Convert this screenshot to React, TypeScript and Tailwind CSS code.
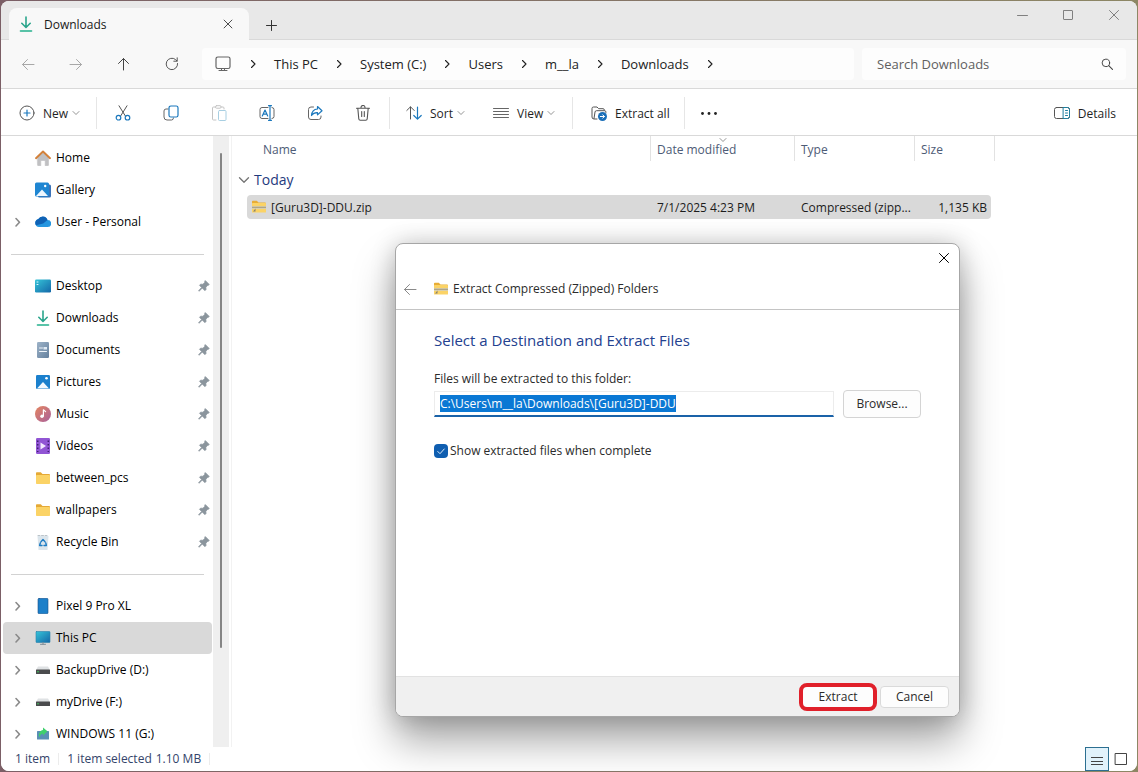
import { useEffect, useRef, type ReactNode } from 'react'

type IconProps = { className?: string }

function Svg({ className = 'h-4 w-4', children }: IconProps & { children: ReactNode }) {
  return (
    <svg
      viewBox="0 0 16 16"
      className={`shrink-0 ${className}`}
      fill="none"
      stroke="currentColor"
      strokeLinecap="round"
      strokeLinejoin="round"
      aria-hidden="true"
    >
      {children}
    </svg>
  )
}

function ChevronRight({ className }: IconProps) {
  return (
    <Svg className={className}>
      <path d="M6.5 4.5L10 8l-3.5 3.5" strokeWidth="1.1" />
    </Svg>
  )
}

function ExpandChevron() {
  return (
    <Svg>
      <path d="M7 4.500L10.500 8.200 7 12" strokeWidth="1.6" />
    </Svg>
  )
}

function ChevronDown({ className }: IconProps) {
  return (
    <Svg className={className}>
      <path d="M2 5l6 6 6-6" strokeWidth="1.8" />
    </Svg>
  )
}

function CloseIcon({ className }: IconProps) {
  return (
    <Svg className={className}>
      <path d="M3.5 3.5l9 9M12.5 3.5l-9 9" />
    </Svg>
  )
}

function ArrowLeft({ className }: IconProps) {
  return (
    <Svg className={className}>
      <path d="M14 8.500H2.5M7.500 3.500l-5 5 5 5" />
    </Svg>
  )
}

function ArrowRight() {
  return (
    <Svg>
      <path d="M2 8.500h11.500M8.500 3.500l5 5-5 5" />
    </Svg>
  )
}

function ArrowUp() {
  return (
    <Svg>
      <path d="M7.500 14V2.500M2.500 7.500l5-5 5 5" />
    </Svg>
  )
}

function RefreshIcon() {
  return (
    <Svg>
      <path d="M13.6 7.500a5.700 5.700 0 1 1-2-3.900l1.400 1.400M13.200 1.800V5.200H9.800" />
    </Svg>
  )
}

function DownloadIcon({ className }: IconProps) {
  return (
    <Svg className={className}>
      <g stroke="#2aa58c" strokeWidth="1.6">
        <path d="M8 1v10M3.800 7.300L8 11.500l4.200-4.200" />
        <path d="M2.500 15h11" stroke="#23b08c" />
      </g>
    </Svg>
  )
}

function HomeIcon() {
  return (
    <Svg>
      <path d="M2.500 7.500L8 2.500l5.500 5V15a.7.7 0 0 1-.7.7H10.200V10.500H5.800v5.200H3.200a.7.7 0 0 1-.7-.7z" fill="#c0c0c2" stroke="#c0c0c2" strokeWidth=".6" />
      <path d="M1 8.200L8 1.500l7 6.700" stroke="#d3813a" strokeWidth="1.9" />
    </Svg>
  )
}

function GalleryIcon() {
  return (
    <Svg>
      <rect x="3" y="2.500" width="13" height="13" rx="1.500" fill="#3a72b8" stroke="none" />
      <rect x="0" y=".5" width="14" height="14" rx="1.500" fill="#1f86d2" stroke="none" />
      <path d="M1 14l6-6.500L13 14z" fill="#eef7ff" stroke="none" />
      <circle cx="10.200" cy="4" r="1.200" fill="#fff" stroke="none" />
    </Svg>
  )
}

function CloudIcon() {
  return (
    <Svg>
      <path d="M4 13a4 4 0 0 1-.5-7.900A5 5 0 0 1 12.500 6a3.500 3.500 0 0 1 .3 7z" fill="#2596e0" stroke="none" />
      <path d="M3.300 5.100A5 5 0 0 1 12.500 6L8.200 9.500 1 11.300A4 4 0 0 1 3.300 5.100z" fill="#0f62b5" stroke="none" />
    </Svg>
  )
}

function DesktopIcon() {
  return (
    <Svg>
      <defs>
        <linearGradient id="desk" x1="0" y1="0" x2="1" y2="1">
          <stop stopColor="#35c4d8" />
          <stop offset="1" stopColor="#1467a8" />
        </linearGradient>
      </defs>
      <rect x="0" y="1.500" width="16" height="13" rx="1.200" fill="url(#desk)" stroke="none" />
      <path d="M2 4h1M2 6.500h1" stroke="#d8f6ff" />
    </Svg>
  )
}

function DocumentIcon() {
  return (
    <Svg>
      <defs>
        <linearGradient id="doc" x1="0" y1="0" x2="1" y2="1">
          <stop stopColor="#9db3c8" />
          <stop offset="1" stopColor="#64809e" />
        </linearGradient>
      </defs>
      <rect x="2" y="0" width="12" height="16" rx="1.200" fill="url(#doc)" stroke="none" />
      <path d="M4.500 9.500h7M4.500 6h3" stroke="#f1f6fb" />
      <rect x="8.500" y="5" width="3.500" height="2.500" fill="#dfeaf4" stroke="none" />
    </Svg>
  )
}

function PictureIcon() {
  return (
    <Svg>
      <rect x="1" y="1" width="14" height="14" rx="1.200" fill="#1b80cd" stroke="none" />
      <path d="M2 14.500L8 8l6 6.500z" fill="#f2f9ff" stroke="none" />
      <circle cx="11.500" cy="4.300" r="1.300" fill="#fff" stroke="none" />
    </Svg>
  )
}

function MusicIcon() {
  return (
    <Svg>
      <defs>
        <linearGradient id="music" x1="0" y1="0" x2="1" y2="1">
          <stop stopColor="#e5855f" />
          <stop offset="1" stopColor="#a8619c" />
        </linearGradient>
      </defs>
      <circle cx="8" cy="8" r="8" fill="url(#music)" stroke="none" />
      <circle cx="7" cy="10.300" r="1.700" fill="#fff" stroke="none" />
      <path d="M8.400 10V3.800l2.200 1.800" stroke="#fff" strokeWidth="1.200" />
    </Svg>
  )
}

function VideoIcon() {
  return (
    <Svg>
      <rect x="1" y="0" width="14" height="16" rx="1.200" fill="#9155d4" stroke="none" />
      <path d="M2.700 2.500v11.500M13.300 2.500v11.500" stroke="#3f1f70" strokeWidth="1.500" strokeDasharray="1.500 2" strokeLinecap="butt" />
      <path d="M5.500 4.500l5.500 3.500-5.500 3.500z" fill="#f3e8ff" stroke="none" />
    </Svg>
  )
}

function FolderIcon() {
  return (
    <Svg>
      <path d="M1 3a.8.8 0 0 1 .8-.8h4L7.500 4H14a1 1 0 0 1 1 1v8H1z" fill="#e5a936" stroke="none" />
      <rect x="1" y="5" width="14" height="9" rx=".8" fill="#fbd366" stroke="none" />
    </Svg>
  )
}

function RecycleIcon() {
  return (
    <Svg>
      <path d="M2.500 2h11l-1 14h-9z" fill="#dbe5ec" stroke="none" />
      <path d="M3 1.500h10" stroke="#aab4bb" strokeDasharray="2 1.500" strokeWidth=".8" />
      <path d="M6 7.700L8 5.500l2 2.200M10.800 9l.6 2.500H9M7 11.500H4.600l.7-2.500" stroke="#1d7cc4" strokeWidth="1.400" />
    </Svg>
  )
}

function PhoneIcon() {
  return (
    <Svg>
      <rect x="3" y=".3" width="10" height="15.500" rx="1.200" fill="#1c7fc9" stroke="#174f86" strokeWidth=".6" />
    </Svg>
  )
}

function PcIcon() {
  return (
    <Svg>
      <rect x="1" y="1.500" width="14" height="11" rx=".6" fill="url(#desk)" stroke="#2a82ab" strokeWidth=".6" />
      <path d="M8 12.500v1.500M5.500 14.300h5" stroke="#7b8a94" />
    </Svg>
  )
}

function DriveIcon() {
  return (
    <Svg>
      <path d="M3 4.500h10l2 3.500H1z" fill="#dfe2e4" stroke="none" />
      <rect x="1" y="7.500" width="14" height="4.500" rx=".6" fill="#4a4b4d" stroke="none" />
      <circle cx="3" cy="9.800" r=".8" fill="#3fd15e" stroke="none" />
    </Svg>
  )
}

function UsbIcon() {
  return (
    <Svg>
      <rect x="2" y="5" width="12" height="8.500" rx=".5" fill="#5a8fb5" stroke="none" />
      <path d="M4 11.500C3.500 7.500 5 4.500 8 4V1.500l4.500 3.700L8 9.500V7.500c-2 .3-3 2-4 4z" fill="#3fd06c" stroke="none" />
    </Svg>
  )
}

function PinIcon() {
  return (
    <Svg className="h-3 w-3 text-[#8b959d]">
      <path d="M10 1l5 5-1.200 1-1 .2-2.300 2.500.2 3-1.500 1.500-3.500-3.500L1.500 15l-.7-.7 4-4.300L2 7l1.500-1.500 3 .2L9 3.300V2z" fill="currentColor" />
    </Svg>
  )
}

function ZipIcon() {
  return (
    <Svg>
      <path d="M1 2.500a.8.8 0 0 1 .8-.8h4L7.500 3.500H14a1 1 0 0 1 1 1V13H1z" fill="#e8ad35" stroke="none" />
      <rect x="1" y="4" width="14" height="9.500" rx=".6" fill="#fbd366" stroke="none" />
      <path d="M1 8.500h14" stroke="#d9cfae" strokeWidth="3" strokeLinecap="butt" />
      <path d="M1.500 8.300h13" stroke="#857b5d" strokeWidth="1.200" strokeDasharray="1 1" strokeLinecap="butt" />
      <path d="M2 12.500l2.500-3v3z" fill="#85806f" stroke="none" />
    </Svg>
  )
}

const BLUE = '#1b78bd'

function PlusCircleIcon() {
  return (
    <Svg>
      <circle cx="8" cy="8" r="7" stroke="#555" />
      <path d="M8 5v6M5 8h6" stroke={BLUE} strokeWidth="1.200" />
    </Svg>
  )
}

function CutIcon() {
  return (
    <Svg>
      <path d="M4 .8l6.500 10.400M12 .8L5.500 11.200" stroke="#555" />
      <circle cx="3.500" cy="12.700" r="2.300" stroke={BLUE} strokeWidth="1.200" />
      <circle cx="12.500" cy="12.700" r="2.300" stroke={BLUE} strokeWidth="1.200" />
    </Svg>
  )
}

function CopyIcon() {
  return (
    <Svg>
      <path d="M5 4H3a2 2 0 0 0-2 2v6a3 3 0 0 0 3 3h4.500a2 2 0 0 0 2-2" stroke="#666" />
      <rect x="6" y="1" width="9" height="11" rx="1.800" stroke={BLUE} strokeWidth="1.200" />
    </Svg>
  )
}

function PasteIcon() {
  return (
    <Svg>
      <path d="M5 15H2.500a1 1 0 0 1-1-1V3a1 1 0 0 1 1-1H4.500M10 2h2a1 1 0 0 1 1 1v1" stroke="#c4c4c4" />
      <rect x="4.500" y=".7" width="5.500" height="2.500" rx="1" stroke="#c4c4c4" />
      <rect x="7.500" y="5.500" width="7.500" height="10" rx="1" stroke="#a8cfe2" />
    </Svg>
  )
}

function RenameIcon() {
  return (
    <Svg>
      <path d="M9 2.500H3a2 2 0 0 0-2 2v7a2 2 0 0 0 2 2h6M13 2.500a2 2 0 0 1 2 2v7a2 2 0 0 1-2 2" stroke="#666" />
      <path d="M11 .7v14.600M9.500.7h3M9.500 15.300h3M3.300 11L6 5l2.700 6M4.200 9.200h3.600" stroke={BLUE} strokeWidth="1.200" />
    </Svg>
  )
}

function ShareIcon() {
  return (
    <Svg>
      <path d="M6.500 2H4a2.500 2.500 0 0 0-2.500 2.500V12A2.500 2.500 0 0 0 4 14.500h7.500A2.500 2.500 0 0 0 14 12v-1" stroke="#666" />
      <path d="M10.500 1.500L15 5.700l-4.500 4.200V7.700C7.500 7.500 5.800 8.600 4.500 10.500 4.800 6.500 7 4.200 10.500 4z" stroke={BLUE} strokeWidth="1.200" />
    </Svg>
  )
}

function TrashIcon() {
  return (
    <Svg>
      <path d="M1.500 3.300h13M6 3.300V2.500a2 2 0 0 1 4 0v.8M2.800 3.300l1 10.700a1.500 1.500 0 0 0 1.500 1.300h5.400a1.500 1.500 0 0 0 1.500-1.300l1-10.700M6.700 6.500v5M9.300 6.500v5" stroke="#555" strokeWidth="1.100" />
    </Svg>
  )
}

function SortIcon() {
  return (
    <Svg>
      <path d="M4.500 14V2M.8 5.500l3.700-3.700 3.700 3.700" stroke="#555" />
      <path d="M11.500 2v12M7.800 10.500l3.700 3.700 3.700-3.700" stroke={BLUE} strokeWidth="1.200" />
    </Svg>
  )
}

function LinesIcon() {
  return (
    <Svg>
      <path d="M.5 3.500h15M.5 6.500h15M.5 9.500h15M.5 12.500h15" stroke="#666" />
    </Svg>
  )
}

function ExtractIcon() {
  return (
    <Svg>
      <path d="M6 14H3a2 2 0 0 1-2-2V3.500A1.500 1.500 0 0 1 2.500 2H6l1.700 1.700H12A1.500 1.500 0 0 1 13.500 5.200M3 13.500L4 7a1.500 1.500 0 0 1 1.500-1.300h8A1.500 1.500 0 0 1 15 7.500" stroke="#555" />
      <circle cx="11.500" cy="11.500" r="4.500" fill="#1b6fb8" stroke="none" />
      <path d="M9.300 11.500h4M11.700 9.800l1.700 1.700-1.700 1.700" stroke="#fff" />
    </Svg>
  )
}

function DetailsIcon() {
  return (
    <Svg>
      <rect x=".5" y="2.500" width="15" height="11" rx="2" stroke="#555" />
      <path d="M9.500 2.500h4a2 2 0 0 1 2 2v7a2 2 0 0 1-2 2h-4zM11.500 5.500h2M11.500 8h2M11.500 10.500h2" stroke="#1f7f9f" />
    </Svg>
  )
}

function MonitorIcon() {
  return (
    <Svg>
      <rect x="1" y="1" width="14" height="11.500" rx="1.800" stroke="#666" strokeWidth="1.200" />
      <path d="M6.500 12.500v2M9.500 12.500v2M4 14.500h8" stroke="#666" />
    </Svg>
  )
}

function SearchIcon() {
  return (
    <Svg className="h-3 w-3">
      <circle cx="6.500" cy="6.500" r="5" strokeWidth="1.300" />
      <path d="M10.300 10.300l5 5" strokeWidth="1.500" />
    </Svg>
  )
}

type NavEntry = { label: string; icon: ReactNode; expandable?: boolean; pinned?: boolean; active?: boolean }

const topItems: NavEntry[] = [
  { label: 'Home', icon: <HomeIcon /> },
  { label: 'Gallery', icon: <GalleryIcon /> },
  { label: 'User - Personal', icon: <CloudIcon />, expandable: true },
]

const pinnedItems: NavEntry[] = [
  { label: 'Desktop', icon: <DesktopIcon />, pinned: true },
  { label: 'Downloads', icon: <DownloadIcon />, pinned: true },
  { label: 'Documents', icon: <DocumentIcon />, pinned: true },
  { label: 'Pictures', icon: <PictureIcon />, pinned: true },
  { label: 'Music', icon: <MusicIcon />, pinned: true },
  { label: 'Videos', icon: <VideoIcon />, pinned: true },
  { label: 'between_pcs', icon: <FolderIcon />, pinned: true },
  { label: 'wallpapers', icon: <FolderIcon />, pinned: true },
  { label: 'Recycle Bin', icon: <RecycleIcon />, pinned: true },
]

const deviceItems: NavEntry[] = [
  { label: 'Pixel 9 Pro XL', icon: <PhoneIcon />, expandable: true },
  { label: 'This PC', icon: <PcIcon />, expandable: true, active: true },
  { label: 'BackupDrive (D:)', icon: <DriveIcon />, expandable: true },
  { label: 'myDrive (F:)', icon: <DriveIcon />, expandable: true },
  { label: 'WINDOWS 11 (G:)', icon: <UsbIcon />, expandable: true },
]

const crumbs = ['This PC', 'System (C:)', 'Users', 'm__la', 'Downloads']

function TitleBar() {
  return (
    <header className="flex h-[39px] shrink-0 items-end border-b border-[#d9d9d9] bg-[#e8e8e8] pl-2">
      <div className="-mb-px flex h-8 w-60 items-center rounded-t-lg bg-[#f8f8f8] pl-[9px] pr-3.5">
        <DownloadIcon />
        <h1 className="ml-2.5 flex-1 pt-0.5 text-xs font-medium text-[#1a1a1a]">Downloads</h1>
        <button aria-label="Close tab" className="text-[#333]">
          <CloseIcon className="h-3.5 w-3.5" />
        </button>
      </div>
      <button className="mb-1.5 ml-3.5 text-[#333]" aria-label="New tab">
        <Svg>
          <path d="M8.500 3.500v10M3.500 8.500h10" />
        </Svg>
      </button>
      <div className="ml-auto flex self-start text-[#808080]">
        <button className="flex h-7 w-[46px] items-center justify-center" aria-label="Minimize">
          <Svg>
            <path d="M3.500 8.500h10" />
          </Svg>
        </button>
        <button className="flex h-7 w-[46px] items-center justify-center" aria-label="Maximize">
          <Svg>
            <rect x="3.500" y="3.500" width="9" height="9" rx=".5" />
          </Svg>
        </button>
        <button className="flex h-7 w-[46px] items-center justify-center" aria-label="Close">
          <CloseIcon />
        </button>
      </div>
    </header>
  )
}

function AddressBar() {
  return (
    <div className="flex h-[49px] shrink-0 items-center border-b border-[#d9d9d9] bg-[#f8f8f8] pl-[3px] pr-[11px]">
      <button className="flex w-12 justify-center text-[#a8a8a8]" aria-label="Back">
        <ArrowLeft />
      </button>
      <button className="flex w-12 justify-center text-[#a8a8a8]" aria-label="Forward">
        <ArrowRight />
      </button>
      <button className="flex w-12 justify-center text-[#444]" aria-label="Up">
        <ArrowUp />
      </button>
      <button className="flex w-12 justify-center text-[#555]" aria-label="Refresh">
        <RefreshIcon />
      </button>
      <nav
        className="ml-1.5 flex h-8 flex-1 items-center rounded bg-[#fdfdfd] pl-[13px] text-[13px] text-[#222]"
        aria-label="Address"
      >
        <MonitorIcon />
        <ChevronRight className="ml-3.5 h-4 w-4" />
        {crumbs.map((crumb) => (
          <div key={crumb} className="flex items-center">
            <a href="#" className="mx-[13px] pt-0.5">
              {crumb}
            </a>
            <ChevronRight />
          </div>
        ))}
      </nav>
      <label className="ml-2 flex h-8 w-[264px] items-center rounded bg-[#fdfdfd] pl-[15px] pr-[13px] text-[#444]">
        <input
          type="search"
          placeholder="Search Downloads"
          aria-label="Search Downloads"
          className="min-w-0 flex-1 bg-transparent pt-0.5 text-[13px] outline-none placeholder:text-[#606060]"
        />
        <SearchIcon />
      </label>
    </div>
  )
}

function Divider() {
  return <div className="h-8 w-px shrink-0 bg-[#e6e6e6]" />
}

function Toolbar() {
  const actions = [
    { label: 'Cut', icon: <CutIcon /> },
    { label: 'Copy', icon: <CopyIcon /> },
    { label: 'Paste', icon: <PasteIcon /> },
    { label: 'Rename', icon: <RenameIcon /> },
    { label: 'Share', icon: <ShareIcon /> },
    { label: 'Delete', icon: <TrashIcon /> },
  ]

  return (
    <div className="flex h-[47px] shrink-0 items-center border-b border-[#d9d9d9] bg-white pt-0.5 text-xs text-[#1f1f1f]">
      <button className="flex w-[95px] items-center pl-[18px]">
        <PlusCircleIcon />
        <span className="ml-2 mr-1 pt-0.5">New</span>
        <ChevronDown className="h-2 w-2 text-[#888]" />
      </button>
      <Divider />
      <div className="flex px-0.5">
        {actions.map((action) => (
          <button key={action.label} className="flex w-12 justify-center" aria-label={action.label}>
            {action.icon}
          </button>
        ))}
      </div>
      <Divider />
      <button className="flex w-[87px] items-center pl-4">
        <SortIcon />
        <span className="ml-2 mr-1 pt-0.5">Sort</span>
        <ChevronDown className="h-2 w-2 text-[#888]" />
      </button>
      <button className="flex w-[95px] items-center pl-4">
        <LinesIcon />
        <span className="ml-2 mr-1 pt-0.5">View</span>
        <ChevronDown className="h-2 w-2 text-[#888]" />
      </button>
      <Divider />
      <button className="flex w-[111px] items-center gap-2 pl-[18px]">
        <ExtractIcon />
        <span className="pt-0.5">Extract all</span>
      </button>
      <Divider />
      <button className="ml-4" aria-label="See more">
        <Svg>
          <g fill="#222" stroke="none">
            <circle cx="1.500" cy="8.500" r="1.400" />
            <circle cx="8" cy="8.500" r="1.400" />
            <circle cx="14.500" cy="8.500" r="1.400" />
          </g>
        </Svg>
      </button>
      <button className="ml-auto flex items-center gap-2 pr-[21px]">
        <DetailsIcon />
        <span className="pt-0.5">Details</span>
      </button>
    </div>
  )
}

function NavList({ items }: { items: NavEntry[] }) {
  return (
    <ul>
      {items.map((item) => (
        <li key={item.label}>
          <a
            href="#"
            className={`ml-0.5 flex h-8 items-center rounded-sm pr-0.5 ${item.active ? 'bg-[#d9d9d9]' : ''}`}
          >
            <span className="flex w-8 items-center pl-1.5 text-[#8a8a8a]">
              {item.expandable && <ExpandChevron />}
            </span>
            {item.icon}
            <span className="ml-[5px] flex-1 whitespace-nowrap">{item.label}</span>
            {item.pinned && <PinIcon />}
          </a>
        </li>
      ))}
    </ul>
  )
}

function Separator() {
  return (
    <div className="flex h-8 items-center pl-2.5 pr-2">
      <hr className="flex-1 border-[#d2d2d2]" />
    </div>
  )
}

function Sidebar() {
  return (
    <aside className="flex w-[231px] shrink-0 overflow-hidden border-r border-[#f2f2f2] text-xs text-black">
      <nav className="w-[211px] pt-1.5" aria-label="Folders">
        <NavList items={topItems} />
        <Separator />
        <NavList items={pinnedItems} />
        <Separator />
        <NavList items={deviceItems} />
      </nav>
      <div className="ml-px flex w-4 justify-center bg-[#efefef] pt-[17px]">
        <div className="h-[495px] w-0.5 rounded bg-[#858585]" />
      </div>
    </aside>
  )
}

function FileList() {
  return (
    <table className="ml-1.5 w-[757px] table-fixed border-separate border-spacing-0 text-left text-xs">
      <colgroup>
        <col className="w-[9px]" />
        <col className="w-[403px]" />
        <col className="w-36" />
        <col className="w-[120px]" />
        <col className="w-[77px]" />
        <col className="w-1" />
      </colgroup>
      <thead>
        <tr className="h-[25px] text-[#4d5b76]">
          <td />
          <th className="pl-4 pt-0.5 font-normal">Name</th>
          <th className="relative border-l border-[#e2e2e2] pl-1.5 pt-0.5 font-normal">
            Date modified
            <ChevronDown className="absolute left-[68px] top-0 h-2 w-2 text-[#888]" />
          </th>
          <th className="border-l border-[#e2e2e2] pl-1.5 pt-0.5 font-normal">Type</th>
          <th className="border-l border-[#e2e2e2] pl-1.5 pt-0.5 font-normal">Size</th>
          <td className="border-r border-[#e2e2e2]" />
        </tr>
      </thead>
      <tbody>
        <tr className="h-[34px]">
          <th colSpan={6} className="pt-1 font-normal">
            <button className="flex items-center gap-1 text-sm text-[#1f3a7d]">
              <ChevronDown className="h-3 w-3 text-[#777]" />
              Today
            </button>
          </th>
        </tr>
        <tr className="h-6 text-[#1c1c1c]">
          <td />
          <td className="rounded-l-sm bg-[#d9d9d9] pl-1">
            <div className="flex items-center gap-1">
              <ZipIcon />
              <span className="pt-0.5">[Guru3D]-DDU.zip</span>
            </div>
          </td>
          <td className="bg-[#d9d9d9] pl-[7px] pt-0.5">7/1/2025 4:23 PM</td>
          <td className="bg-[#d9d9d9] pl-[7px] pt-0.5">Compressed (zipp...</td>
          <td className="rounded-r-sm bg-[#d9d9d9] pr-1 pt-0.5 text-right">1,135 KB</td>
          <td />
        </tr>
      </tbody>
    </table>
  )
}

function ExtractDialog() {
  const pathRef = useRef<HTMLInputElement>(null)

  useEffect(() => {
    pathRef.current?.focus()
    pathRef.current?.select()
  }, [])

  return (
    <section
      role="dialog"
      aria-labelledby="dialog-title"
      className="absolute left-[163px] top-[107px] flex h-[474px] w-[565px] flex-col overflow-hidden rounded-lg border border-[#a6a6a6] bg-white text-xs text-[#2b2b2b] shadow-[0_24px_40px_rgba(0,0,0,0.35),0_0_24px_rgba(0,0,0,0.2)]"
    >
      <div className="flex h-7 shrink-0 items-center justify-end pr-[7px]">
        <button aria-label="Close" className="text-black">
          <CloseIcon />
        </button>
      </div>
      <div className="flex h-[38px] shrink-0 items-center border-b border-[#c4c4c4] pb-1 pl-1.5">
        <button aria-label="Back" className="text-[#8a8a8a]">
          <ArrowLeft />
        </button>
        <div className="ml-[15px] flex items-center gap-1">
          <ZipIcon />
          <h2 id="dialog-title">Extract Compressed (Zipped) Folders</h2>
        </div>
      </div>

      <div className="flex-1 px-[38px] pt-[18px]">
        <h3 className="text-[15px] leading-6 text-[#23418f]">Select a Destination and Extract Files</h3>
        <label htmlFor="target" className="mt-[19px] block leading-4">
          Files will be extracted to this folder:
        </label>
        <div className="mt-[3px] flex items-center gap-[9px]">
          <input
            id="target"
            ref={pathRef}
            defaultValue="C:\Users\m__la\Downloads\[Guru3D]-DDU"
            className="h-[26px] min-w-0 flex-1 border border-b-2 border-[#ececec] border-b-[#1a62a8] px-[5px] outline-none selection:bg-[#0a78d4] selection:text-white"
          />
          <button className="h-7 w-[78px] rounded border border-[#d4d4d4] bg-[#fdfdfd]">Browse...</button>
        </div>
        <label className="mt-[25px] flex items-center gap-0.5 leading-4">
          <span className="relative flex h-3.5 w-3.5">
            <input type="checkbox" defaultChecked className="h-3.5 w-3.5 appearance-none rounded-sm bg-[#0f5eb0]" />
            <svg
              viewBox="0 0 14 14"
              className="pointer-events-none absolute inset-0"
              fill="none"
              stroke="#dcebfa"
              aria-hidden="true"
            >
              <path d="M3.500 7.200l2.500 2.500 4.500-5" />
            </svg>
          </span>
          Show extracted files when complete
        </label>
      </div>

      <div className="flex h-10 shrink-0 items-center justify-end gap-[3px] border-t border-[#e2e2e2] bg-[#f0f0f0] pr-2.5">
        <button className="h-7 w-[78px] rounded-lg border-4 border-[#e0202a] bg-[#fdfdfd]">Extract</button>
        <button className="h-[22px] w-[69px] rounded border border-[#dadada] bg-[#fdfdfd]">Cancel</button>
      </div>
    </section>
  )
}

function StatusBar() {
  return (
    <footer className="flex h-6 shrink-0 items-center bg-white pl-3.5 text-xs text-[#34446a]">
      <span>1 item</span>
      <span className="mx-2 h-3 w-px bg-[#ececec]" />
      <span>1 item selected</span>
      <span className="ml-1">1.10 MB</span>
      <span className="ml-2 h-3 w-px bg-[#ececec]" />
      <div className="ml-auto flex items-center gap-1 pr-2 text-[#444]">
        <button
          className="flex h-6 w-6 items-center justify-center border border-[#2c6f91] bg-[#e1f2fb]"
          aria-label="Details view"
        >
          <Svg>
            <path d="M2 6.500h12M2 10.500h12M2 13.500h12" strokeLinecap="butt" />
          </Svg>
        </button>
        <button aria-label="Large icons view">
          <Svg>
            <rect x="2.500" y="2.500" width="11" height="11" />
          </Svg>
        </button>
      </div>
    </footer>
  )
}

export default function App() {
  return (
    <div className="flex h-screen bg-linear-to-r from-[#7b5f66] to-[#8d8765] p-px font-['Open_Sans','Noto_Sans',sans-serif]">
      <div className="flex min-w-0 flex-1 flex-col overflow-hidden rounded-lg bg-white">
        <TitleBar />
        <AddressBar />
        <Toolbar />
        <div className="flex min-h-0 flex-1">
          <Sidebar />
          <main className="relative min-w-0 flex-1">
            <FileList />
            <ExtractDialog />
          </main>
        </div>
        <StatusBar />
      </div>
    </div>
  )
}
